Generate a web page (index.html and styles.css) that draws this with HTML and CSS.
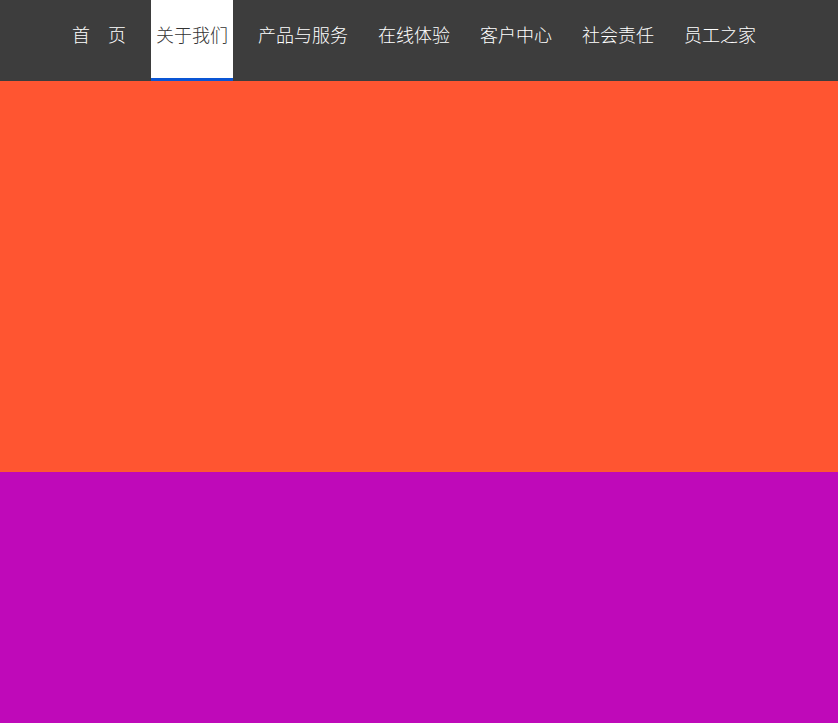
FILE: index.html
```html
<!DOCTYPE html>
<html lang="zh-CN">
<head>
<meta charset="utf-8">
<title>关于我们</title>
<link rel="stylesheet" href="styles.css">
</head>
<body>
<nav class="nav">
  <ul class="menu">
    <li class="item"><a href="#">首　页</a></li>
    <li class="item active"><a href="#">关于我们</a></li>
    <li class="item"><a href="#">产品与服务</a></li>
    <li class="item"><a href="#">在线体验</a></li>
    <li class="item"><a href="#">客户中心</a></li>
    <li class="item"><a href="#">社会责任</a></li>
    <li class="item"><a href="#">员工之家</a></li>
  </ul>
</nav>
<section class="banner"></section>
<section class="panel"></section>
</body>
</html>
```
FILE: styles.css
```css
html, body {
  margin: 0;
  padding: 0;
}
body {
  font-family: "Noto Sans CJK SC", "Noto Sans", sans-serif;
  background: #bf09b9;
  min-height: 723px;
}
.nav {
  background: #3d3d3d;
  height: 81px;
}
.menu {
  list-style: none;
  margin: 0;
  padding: 0 0 0 67px;
  display: flex;
  gap: 20px;
  height: 81px;
}
.item {
  height: 78px;
  border-bottom: 3px solid transparent;
}
.item a {
  display: block;
  padding: 0 5px;
  line-height: 69px;
  font-size: 18px;
  font-weight: 300;
  color: #ffffff;
  text-decoration: none;
}
.item.active {
  background: #ffffff;
  border-bottom-color: #0a55d4;
}
.item.active a {
  color: #333333;
}
.banner {
  background: #ff5531;
  height: 391px;
}
.panel {
  background: #bf09b9;
  height: 251px;
}
```
